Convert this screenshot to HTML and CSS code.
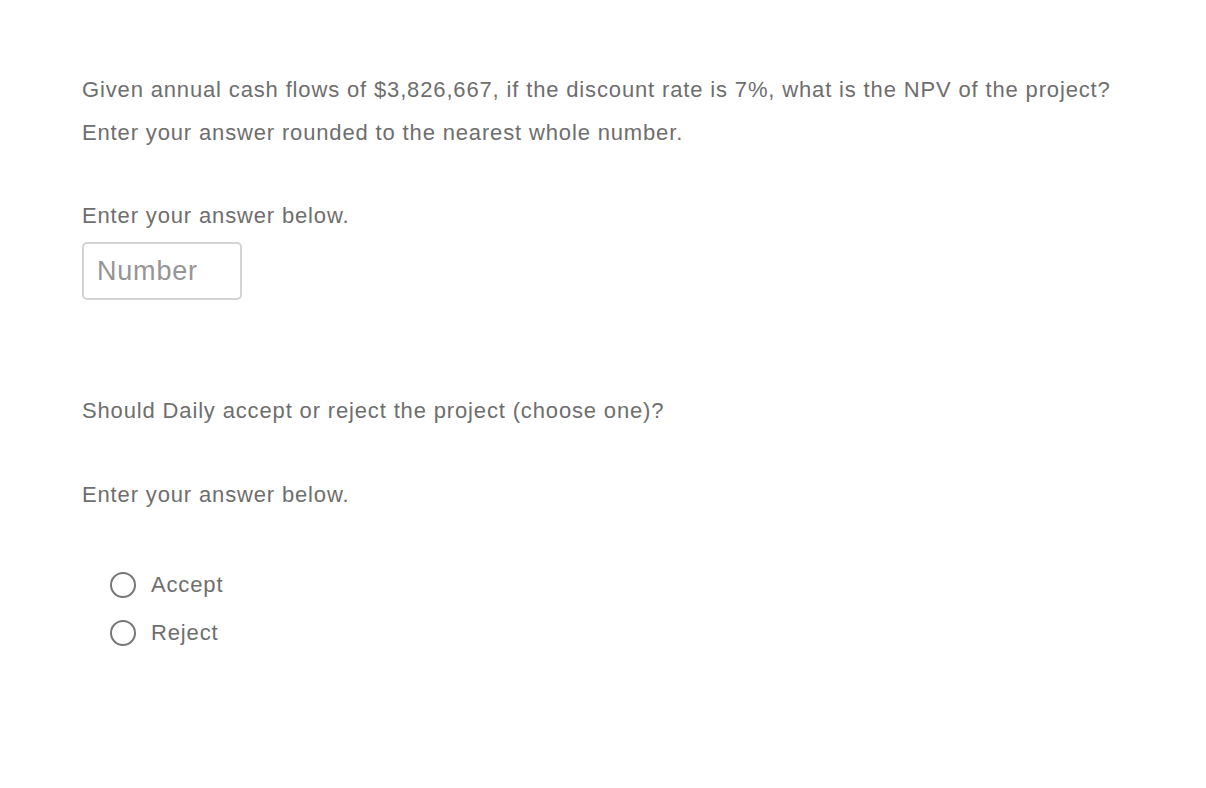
FILE: index.html
```html
<!DOCTYPE html>
<html>
<head>
<meta charset="utf-8">
<link rel="stylesheet" href="styles.css">
</head>
<body>
<main class="question">
  <div class="prompt">
    <p class="line">Given annual cash flows of $3,826,667, if the discount rate is 7%, what is the NPV of the project?</p>
    <p class="line">Enter your answer rounded to the nearest whole number.</p>
  </div>
  <p class="label first-label">Enter your answer below.</p>
  <input class="number" type="text" placeholder="Number">
  <p class="label ask">Should Daily accept or reject the project (choose one)?</p>
  <p class="label second-label">Enter your answer below.</p>
  <div class="choices">
    <label class="choice"><span class="radio"></span><span>Accept</span></label>
    <label class="choice"><span class="radio"></span><span>Reject</span></label>
  </div>
</main>
</body>
</html>
```
FILE: styles.css
```css
html, body {
  margin: 0;
  padding: 0;
  background: #ffffff;
}
body {
  font-family: "Liberation Sans", Arial, sans-serif;
  color: #6e6e6e;
  font-size: 22px;
  letter-spacing: 0.85px;
}
.question {
  padding: 68px 0 0 82px;
  display: flex;
  flex-direction: column;
  align-items: flex-start;
}
.prompt .line {
  margin: 0;
  line-height: 43px;
}
.label {
  margin: 0;
  line-height: 43px;
}
.first-label {
  margin-top: 40px;
}
.number {
  margin: 5px 0 0 0;
  width: 160px;
  height: 58px;
  box-sizing: border-box;
  border: 2px solid #d3d3d3;
  border-radius: 5px;
  padding: 0 0 0 13px;
  font-family: "Liberation Sans", Arial, sans-serif;
  font-size: 27px;
  letter-spacing: 0.8px;
  color: #6e6e6e;
  background: #ffffff;
  outline: none;
}
.number::placeholder {
  color: #959595;
}
.ask {
  margin-top: 89px;
}
.second-label {
  margin-top: 41px;
}
.choices {
  margin-top: 56px;
  margin-left: 28px;
  display: flex;
  flex-direction: column;
  gap: 22px;
}
.choice {
  display: flex;
  align-items: center;
  gap: 15px;
  height: 26px;
  line-height: 26px;
}
.radio {
  width: 26px;
  height: 26px;
  box-sizing: border-box;
  border: 2px solid #777777;
  border-radius: 50%;
}
```
